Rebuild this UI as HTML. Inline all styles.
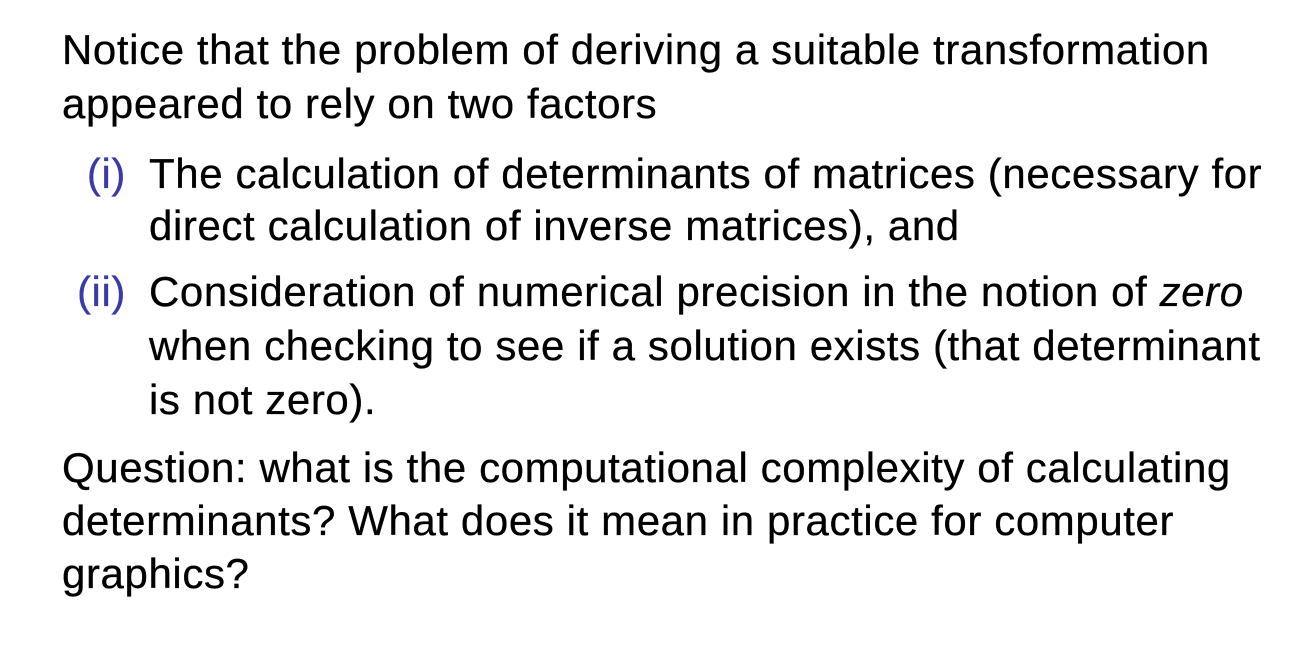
<!DOCTYPE html>
<html><head><meta charset="utf-8"><style>
body{margin:0;width:1310px;height:648px;background:#fff;overflow:hidden;font-family:"Liberation Sans",sans-serif;font-size:42px;letter-spacing:0.6px;color:#000;-webkit-text-stroke:0.3px #000}
.l{position:absolute;line-height:54px;white-space:nowrap}
.n{color:#3a3aa8;-webkit-text-stroke:0.3px #3a3aa8;position:absolute;line-height:54px;text-align:right;width:66px;left:60px}
</style></head><body>
<div class="l" style="left:62px;top:23px">Notice that the problem of deriving a suitable transformation</div>
<div class="l" style="left:62px;top:77px">appeared to rely on two factors</div>
<div class="n" style="top:147px">(i)</div>
<div class="l" style="left:149px;top:147px">The calculation of determinants of matrices (necessary for</div>
<div class="l" style="left:149px;top:199px">direct calculation of inverse matrices), and</div>
<div class="n" style="top:265px">(ii)</div>
<div class="l" style="left:149px;top:265px">Consideration of numerical precision in the notion of <i>zero</i></div>
<div class="l" style="left:149px;top:319px">when checking to see if a solution exists (that determinant</div>
<div class="l" style="left:149px;top:373px">is not zero).</div>
<div class="l" style="left:62px;top:441px">Question: what is the computational complexity of calculating</div>
<div class="l" style="left:62px;top:494px">determinants? What does it mean in practice for computer</div>
<div class="l" style="left:62px;top:547px">graphics?</div>
</body></html>
